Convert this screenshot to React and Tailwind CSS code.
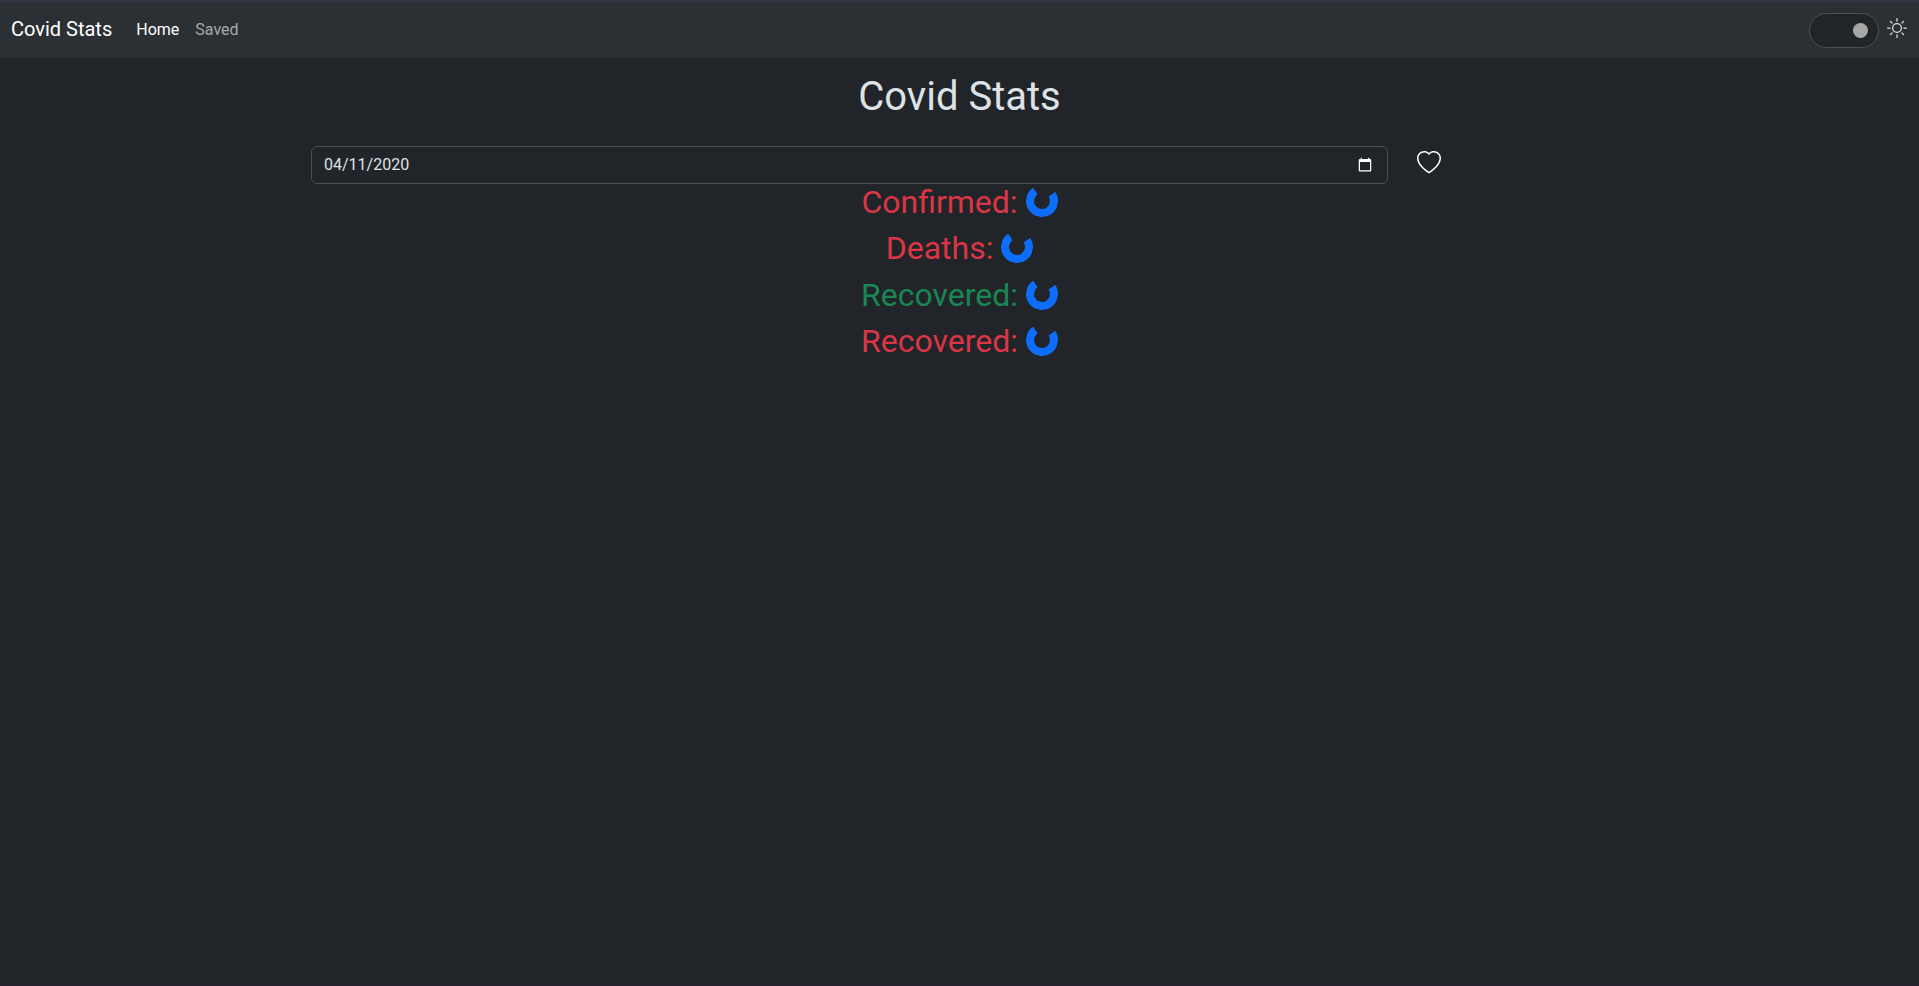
import { useState } from "react";
import { BsHeart, BsSun } from "react-icons/bs";

const stats = [
  { id: "confirmed", label: "Confirmed:", tone: "text-[#dc3545]" },
  { id: "deaths", label: "Deaths:", tone: "text-[#dc3545]" },
  { id: "recovered", label: "Recovered:", tone: "text-[#198754]" },
  { id: "active", label: "Recovered:", tone: "text-[#dc3545]" },
];

function Spinner() {
  return (
    <span
      role="status"
      aria-label="Loading"
      className="inline-block size-8 rotate-[-79deg] rounded-full border-8 border-[#0d6efd] border-r-transparent align-[-4px]"
    />
  );
}

function Navbar({ dark, onToggle }) {
  return (
    <nav className="flex h-14 items-center bg-[#2b3035] pr-3 pl-[11px]">
      <a href="#home" className="mr-4 pb-0.5 text-xl text-white">
        Covid Stats
      </a>
      <a href="#home" aria-current="page" className="p-2 text-white">
        Home
      </a>
      <a href="#saved" className="p-2 text-[#a6a8aa]">
        Saved
      </a>
      <div className="ml-auto flex items-start gap-2">
        <input
          type="checkbox"
          aria-label="Dark mode"
          checked={dark}
          onChange={onToggle}
          className="flex h-[35px] w-[70px] cursor-pointer appearance-none items-center rounded-full border border-[#495057] bg-[#212529] px-[10px] pt-px before:size-[15px] before:rounded-full before:bg-[#a7a7a7] checked:justify-end"
        />
        <BsSun aria-hidden="true" className="mt-[5px] size-5 text-[#dee2e6]" />
      </div>
    </nav>
  );
}

export default function App() {
  const [dark, setDark] = useState(true);
  const [date, setDate] = useState("2020-04-11");

  return (
    <div className="min-h-screen border-y-2 border-t-[#2f3446] border-b-[#23232d] bg-[#212529] font-[Roboto,sans-serif] text-base text-[#dee2e6]">
      <Navbar dark={dark} onToggle={() => setDark(!dark)} />
      <main className="mx-auto max-w-[1321px] px-3 pt-3">
        <h1 className="mb-[22px] text-center text-[40px] leading-[54px]">Covid Stats</h1>
        <div className="grid h-[37px] grid-cols-12 items-start">
          <input
            type="date"
            aria-label="Date"
            value={date}
            onChange={(e) => setDate(e.target.value)}
            className="col-span-10 mr-1 h-[38px] rounded-md border border-[#495057] bg-[#212529] px-3 text-base [color-scheme:dark] [&::-webkit-datetime-edit-day-field]:p-0 [&::-webkit-datetime-edit-month-field]:p-0 [&::-webkit-datetime-edit-year-field]:p-0"
          />
          <button type="button" aria-label="Save this date" className="mt-[5px] ml-[25px] w-fit cursor-pointer text-white">
            <BsHeart className="size-6" />
          </button>
        </div>
        <div className="text-center text-[32px] leading-[1.2]">
          {stats.map((stat) => (
            <h2 key={stat.id} className={`mb-2 ${stat.tone}`}>
              {stat.label} <Spinner />
            </h2>
          ))}
        </div>
      </main>
    </div>
  );
}
